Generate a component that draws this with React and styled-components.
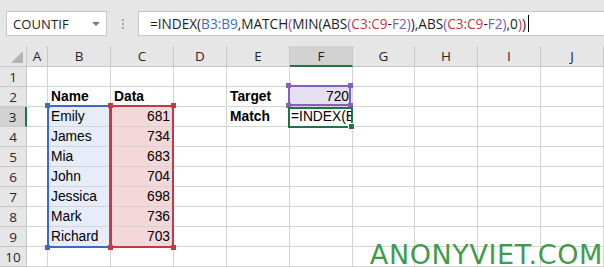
import React from "react";
import styled, { createGlobalStyle, css } from "styled-components";

const GlobalStyle = createGlobalStyle`
  html, body { margin: 0; padding: 0; background: #ffffff; overflow: hidden; }
  #root { width: 604px; height: 267px; }
`;

const Page = styled.div`
  width: 604px;
  height: 267px;
  display: flex;
  flex-direction: column;
  font-family: "Open Sans", "Noto Sans", sans-serif;
`;

const Toolbar = styled.div`
  height: 46px;
  flex: none;
  background: #e6e6e6;
  display: flex;
  align-items: flex-start;
  padding: 11px 0 0 6px;
  box-sizing: border-box;
`;

const NameBox = styled.div`
  width: 101px;
  height: 25px;
  box-sizing: border-box;
  background: #fff;
  border: 1px solid #c6c6c6;
  display: flex;
  align-items: center;
  justify-content: space-between;
  padding: 0 6px 0 6px;
`;

const NameText = styled.span`
  font-size: 13px;
  color: #222;
  letter-spacing: 0.1px;
`;

const DropArrow = styled.span`
  width: 0;
  height: 0;
  border-left: 4px solid transparent;
  border-right: 4px solid transparent;
  border-top: 4px solid #7a7a7a;
  margin-top: 1px;
`;

const DotsZone = styled.div`
  width: 31px;
  height: 25px;
  display: flex;
  align-items: center;
  justify-content: center;
`;

const Dots = styled.div`
  display: flex;
  flex-direction: column;
  gap: 2px;
  & > span {
    width: 2px;
    height: 2px;
    background: #a6a6a6;
  }
`;

const FormulaBox = styled.div`
  flex: 1;
  height: 25px;
  box-sizing: border-box;
  background: #fff;
  border: 1px solid #c6c6c6;
  border-right: none;
  display: flex;
  align-items: center;
  padding-left: 11px;
`;

const FormulaText = styled.span`
  font-size: 13.6px;
  color: #1e1e1e;
  white-space: nowrap;
`;

const Tok = styled.span`
  color: ${(p) => p.$c || "#1e1e1e"};
`;

const Caret = styled.span`
  width: 1px;
  height: 17px;
  background: #000;
  margin-left: 2px;
`;

const Sheet = styled.div`
  position: relative;
  flex: 1;
  overflow: hidden;
`;

const Grid = styled.div`
  display: grid;
  grid-template-columns: 27px 21px 63px 63px 53px 63px 63px 62px 63px 63px 63px;
  grid-template-rows: 21px repeat(10, 20px);
`;

const placed = css`
  grid-column: ${(p) => p.$gc};
  grid-row: ${(p) => p.$gr};
`;

const HeadCell = styled.div`
  ${placed};
  box-sizing: border-box;
  background: ${(p) => (p.$sel ? "#d2d2d2" : "#e6e6e6")};
  border-right: 1px solid #c8c8c8;
  border-bottom: 1px solid #c8c8c8;
  display: flex;
  align-items: center;
  justify-content: center;
  font-size: 13.5px;
  color: #262626;
  ${(p) =>
    p.$sel === "col" &&
    css`
      border-bottom: 2px solid #217346;
      color: #1e1e1e;
    `}
  ${(p) =>
    p.$sel === "row" &&
    css`
      border-right: 2px solid #217346;
      color: #1e1e1e;
    `}
`;

const Corner = styled(HeadCell)`
  align-items: flex-end;
  justify-content: flex-end;
  padding: 0 3px 3px 0;
`;

const Cell = styled.div`
  ${placed};
  box-sizing: border-box;
  border-right: 1px solid #d4d4d4;
  border-bottom: 1px solid #d4d4d4;
  background: ${(p) => p.$fill || "#fff"};
  font-family: "Liberation Sans", Arial, sans-serif;
  font-size: 13.8px;
  font-weight: ${(p) => (p.$bold ? 700 : 400)};
  color: #000;
  line-height: 19px;
  padding: 0 ${(p) => (p.$right ? "3px" : "2px")} 0 3px;
  text-align: ${(p) => (p.$right ? "right" : "left")};
  white-space: nowrap;
`;

const RangeBox = styled.div`
  ${placed};
  position: relative;
  z-index: 2;
  border: 2px solid ${(p) => p.$color};
  margin: ${(p) => p.$margin || "-2px 0 -1px -1px"};
  pointer-events: none;
`;

const Handle = styled.span`
  position: absolute;
  width: 5px;
  height: 5px;
  background: ${(p) => p.$color};
  ${(p) => (p.$v === "t" ? "top: -4px;" : "bottom: -4px;")}
  ${(p) => (p.$h === "l" ? "left: -4px;" : "right: -4px;")}
`;

const FillHandle = styled.span`
  position: absolute;
  width: 5px;
  height: 5px;
  background: #217346;
  border: 1px solid #fff;
  right: -4px;
  bottom: -4px;
`;

const ActiveText = styled.div`
  ${placed};
  position: relative;
  z-index: 3;
  font-family: "Liberation Sans", Arial, sans-serif;
  font-size: 13.8px;
  line-height: 19px;
  padding-left: 1px;
  overflow: hidden;
  white-space: nowrap;
  width: 60px;
  color: #000;
`;

const Watermark = styled.div`
  position: absolute;
  right: 1px;
  bottom: -3px;
  font-family: "DejaVu Sans", sans-serif;
  font-size: 27px;
  color: #3f9c4a;
  letter-spacing: 0.6px;
  white-space: nowrap;
  z-index: 5;
`;

const colLetters = ["A", "B", "C", "D", "E", "F", "G", "H", "I", "J"];

const data = {
  2: { B: ["Name", { bold: true }], C: ["Data", { bold: true }], E: ["Target", { bold: true }], F: ["720", { right: true, fill: "#e5dff0" }] },
  3: { B: ["Emily"], C: ["681"], E: ["Match", { bold: true }] },
  4: { B: ["James"], C: ["734"] },
  5: { B: ["Mia"], C: ["683"] },
  6: { B: ["John"], C: ["704"] },
  7: { B: ["Jessica"], C: ["698"] },
  8: { B: ["Mark"], C: ["736"] },
  9: { B: ["Richard"], C: ["703"] },
};

function cellProps(r, c) {
  const d = data[r] && data[r][c];
  const text = d ? d[0] : "";
  let opts = d && d[1] ? d[1] : {};
  let fill;
  if (c === "B" && r >= 3 && r <= 9) fill = "#e6edf8";
  if (c === "C" && r >= 3 && r <= 9) {
    fill = "#f4d8d9";
    opts = { ...opts, right: true };
  }
  if (opts.fill) fill = opts.fill;
  return { text, bold: opts.bold, right: opts.right, fill };
}

const Corners = ({ color }) => (
  <>
    <Handle $color={color} $v="t" $h="l" />
    <Handle $color={color} $v="t" $h="r" />
    <Handle $color={color} $v="b" $h="l" />
    <Handle $color={color} $v="b" $h="r" />
  </>
);

export default function App() {
  const rows = [];
  for (let r = 1; r <= 10; r++) {
    rows.push(
      <HeadCell key={`rh${r}`} $gc="1" $gr={`${r + 1}`} $sel={r === 3 ? "row" : undefined}>
        {r}
      </HeadCell>
    );
    colLetters.forEach((c, i) => {
      const p = cellProps(r, c);
      rows.push(
        <Cell
          key={`${c}${r}`}
          $gc={`${i + 2}`}
          $gr={`${r + 1}`}
          $bold={p.bold}
          $right={p.right}
          $fill={p.fill}
        >
          {p.text}
        </Cell>
      );
    });
  }

  return (
    <Page>
      <GlobalStyle />
      <Toolbar>
        <NameBox>
          <NameText>COUNTIF</NameText>
          <DropArrow />
        </NameBox>
        <DotsZone>
          <Dots>
            <span />
            <span />
            <span />
          </Dots>
        </DotsZone>
        <FormulaBox>
          <FormulaText>
            <Tok>=INDEX(</Tok>
            <Tok $c="#3d6cc4">B3:B9</Tok>
            <Tok>,MATCH</Tok>
            <Tok $c="#c93a6b">(</Tok>
            <Tok>MIN(ABS</Tok>
            <Tok $c="#8a4fb0">(</Tok>
            <Tok $c="#c8383e">C3:C9</Tok>
            <Tok>-</Tok>
            <Tok $c="#7d5cb6">F2</Tok>
            <Tok $c="#8a4fb0">)</Tok>
            <Tok>),ABS</Tok>
            <Tok $c="#8a4fb0">(</Tok>
            <Tok $c="#c8383e">C3:C9</Tok>
            <Tok>-</Tok>
            <Tok $c="#7d5cb6">F2</Tok>
            <Tok $c="#8a4fb0">)</Tok>
            <Tok>,0</Tok>
            <Tok $c="#c93a6b">)</Tok>
            <Tok>)</Tok>
          </FormulaText>
          <Caret />
        </FormulaBox>
      </Toolbar>
      <Sheet>
        <Grid>
          <Corner $gc="1" $gr="1">
            <svg width="12" height="12" viewBox="0 0 12 12">
              <polygon points="12,0 12,12 0,12" fill="#b4b4b4" />
            </svg>
          </Corner>
          {colLetters.map((c, i) => (
            <HeadCell key={`ch${c}`} $gc={`${i + 2}`} $gr="1" $sel={c === "F" ? "col" : undefined}>
              {c}
            </HeadCell>
          ))}
          {rows}
          <RangeBox $gc="3 / 4" $gr="4 / 11" $color="#3a6cc6">
            <Corners color="#3a6cc6" />
          </RangeBox>
          <RangeBox $gc="4 / 5" $gr="4 / 11" $color="#c43a44">
            <Corners color="#c43a44" />
          </RangeBox>
          <RangeBox $gc="7 / 8" $gr="3 / 4" $color="#8462b8" $margin="-2px 2px 1px -2px">
            <Corners color="#8462b8" />
          </RangeBox>
          <RangeBox $gc="7 / 8" $gr="4 / 5" $color="#217346" $margin="0px 0px -1px -2px">
            <FillHandle />
          </RangeBox>
          <ActiveText $gc="7 / 8" $gr="4 / 5">=INDEX(B3:B9,MATCH(</ActiveText>
        </Grid>
        <Watermark>ANONYVIET.COM</Watermark>
      </Sheet>
    </Page>
  );
}
